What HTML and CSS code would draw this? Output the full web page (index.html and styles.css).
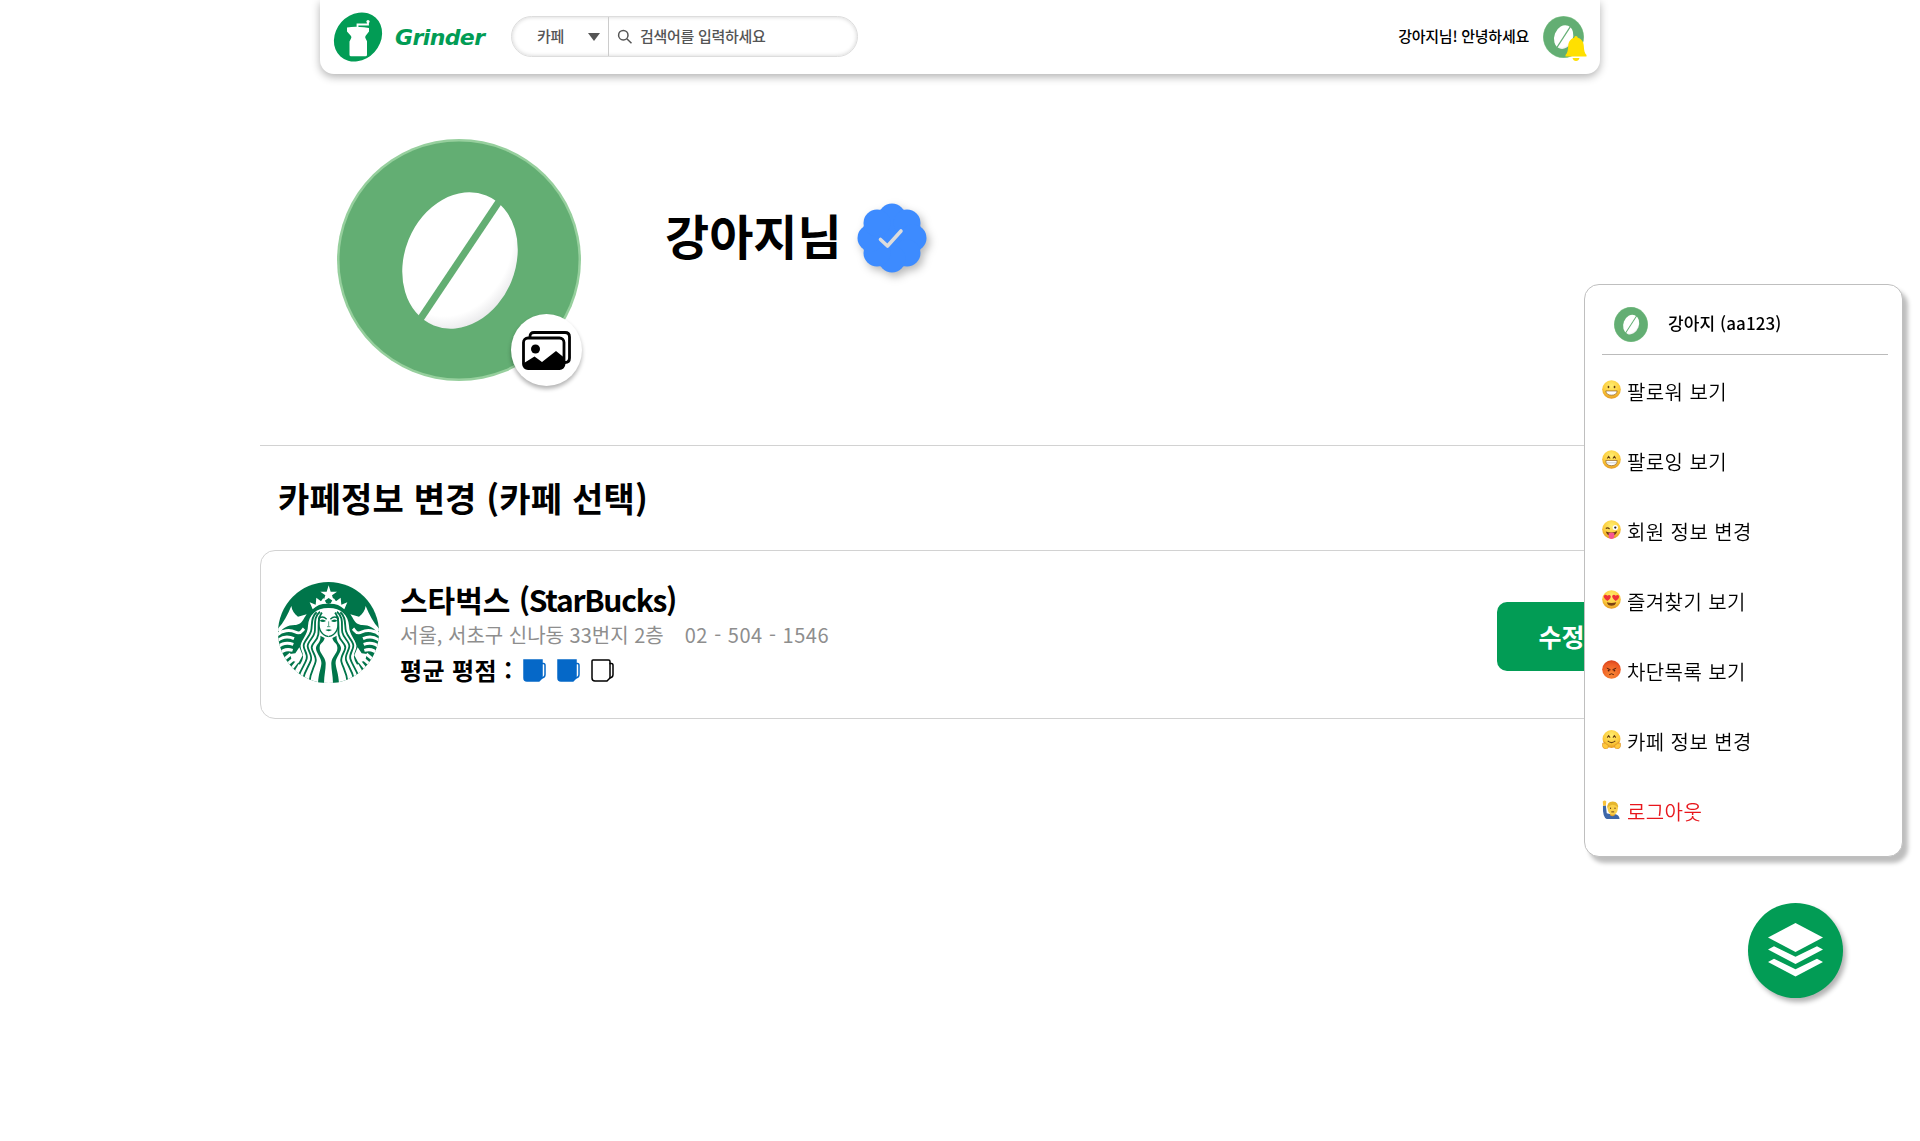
FILE: index.html
```html
<!DOCTYPE html>
<html lang="ko">
<head>
<meta charset="utf-8">
<title>Grinder</title>
<link rel="stylesheet" href="styles.css">
</head>
<body>
<svg class="defs" aria-hidden="true">
  <defs>
    <radialGradient id="beanShade" cx="0.4" cy="0.42" r="0.66">
      <stop offset="0.78" stop-color="#fff"/><stop offset="1" stop-color="#e4e4e6"/>
    </radialGradient>
    <radialGradient id="yellowFace" cx="0.5" cy="0.3" r="0.75">
      <stop offset="0" stop-color="#ffee70"/><stop offset="0.6" stop-color="#fccb3c"/><stop offset="1" stop-color="#e08e1c"/>
    </radialGradient>
    <radialGradient id="redFace" cx="0.5" cy="0.75" r="0.8">
      <stop offset="0" stop-color="#fa8a35"/><stop offset="0.7" stop-color="#ed5b25"/><stop offset="1" stop-color="#cf3a18"/>
    </radialGradient>
    <symbol id="avatar" viewBox="0 0 244 242" preserveAspectRatio="none">
      <ellipse cx="122" cy="121" rx="122" ry="121" fill="#96cf9d"/>
      <ellipse cx="122" cy="121" rx="119.5" ry="118.5" fill="#63ae73"/>
      <ellipse cx="123" cy="121.500" rx="55.500" ry="70" transform="rotate(22 123 121.500)" fill="url(#beanShade)"/>
      <path d="M82 182 163 61" stroke="#63ae73" stroke-width="7"/>
    </symbol>
  </defs>
</svg>

<header class="header">
  <a class="brand">
    <svg class="brand-logo" viewBox="0 0 48 48">
      <ellipse cx="24" cy="24" rx="22.300" ry="26.200" transform="rotate(42 24 24)" fill="#029c55"/>
      <path d="M13 14.500q8-1.500 17-.2l5 .7v3.500l-3.500 4.500q-.6 1.200 0 2.200l1.500 3v13.500q0 1.500-1.500 1.500H17q-1.500 0-1.500-1.500V28.500l1.500-3q.8-1.200 0-2.500L13 18.500z" fill="#fff"/>
      <path d="M23.500 14v-2.500h10.500v-3" fill="none" stroke="#fff" stroke-width="1.800"/>
      <circle cx="34" cy="8.500" r="1.600" fill="#fff"/>
    </svg>
    <span class="brand-name">Grinder</span>
  </a>
  <div class="search">
    <div class="search-type"><span>카페</span><i class="caret"></i></div>
    <div class="search-box">
      <svg class="search-icon" viewBox="0 0 16 16"><circle cx="6.300" cy="6.200" r="4.700"/><path d="m9.800 9.700 4.700 4.600"/></svg>
      <span>검색어를 입력하세요</span>
    </div>
  </div>
  <div class="greeting">
    <span class="greeting-text">강아지님! 안녕하세요</span>
    <div class="greeting-avatar">
      <svg class="fill"><use href="#avatar"/></svg>
      <svg class="bell" viewBox="0 0 22 26"><path d="M11 0q1.600 0 1.800 1.700C17 3 18.600 6 18.800 10c.2 4.500.8 7 2.700 9v1.500H.5V19c1.900-2 2.500-4.500 2.700-9C3.400 6 5 3 9.200 1.700 9.400 0 11 0 11 0z"/><path d="M7.500 22h7q-.8 3-3.500 3t-3.500-3z"/></svg>
    </div>
  </div>
</header>

<main class="page">
  <section class="profile">
    <div class="profile-picture">
      <svg class="fill"><use href="#avatar"/></svg>
      <button class="picture-button">
        <svg viewBox="0 0 49 39"><path d="M8 6V5.500Q8 1.500 12 1.500H43Q47.500 1.500 47.500 6V27Q47.500 31.500 43 31.500H42" fill="none" stroke="#000" stroke-width="2.800"/><rect x="1.500" y="7" width="40.500" height="30.500" rx="4.500" fill="#fff" stroke="#000" stroke-width="2.800"/><circle cx="13.500" cy="18" r="4.500"/><path d="m2 32 10.500-6.500L20 31l14-11 8 6.500V34q0 4-4 4H5q-3 0-3-3z"/></svg>
      </button>
    </div>
    <h1 class="profile-name">강아지님</h1>
    <svg class="verified" viewBox="0 0 70 70">
      <g fill="#3d8bff"><circle cx="35" cy="35" r="30.500"/><circle cx="35" cy="14" r="13.500"/><circle cx="50" cy="20" r="13.500"/><circle cx="56" cy="35" r="13.500"/><circle cx="50" cy="50" r="13.500"/><circle cx="35" cy="56" r="13.500"/><circle cx="20" cy="50" r="13.500"/><circle cx="14" cy="35" r="13.500"/><circle cx="20" cy="20" r="13.500"/></g>
      <path d="m23.500 36.500 7 6.500L44 28" fill="none" stroke="#dcdcdc" stroke-width="3.600" stroke-linecap="round" stroke-linejoin="round"/>
    </svg>
  </section>

  <section class="cafes">
    <h2 class="cafes-title">카페정보 변경 (카페 선택)</h2>
    <article class="cafe">
      <svg class="cafe-logo" viewBox="24 20 303 303">
        <defs>
          <clipPath id="disc"><circle cx="175.500" cy="171.500" r="151.500"/></clipPath>
          <g id="sirenHalf">
            <path d="M64 92C66 106 73 116 84 124L110 117C100 130 98 146 78 149 54 148 38 158 30 172L20 164C38 146 52 122 64 92Z" fill="#fff"/>
            <g fill="none" stroke="#fff" stroke-width="9">
              <path d="M20 180C36 164 60 162 76 170S96 166 102 160"/>
              <path d="M20 198C38 182 58 184 72 190"/><path d="M22 217C38 200 58 203 70 207"/>
              <path d="M28 236C42 219 58 222 68 225"/><path d="M38 256 62 236"/>
              <path d="M46 272 74 248"/><path d="M60 286 82 258"/><path d="M72 300 90 268"/>
            </g>
            <path d="M60 236 76 234 88 216 98 240 86 262 66 256Z" fill="#fff"/>
            <path d="M177 98C139 97 116 119 114 151 113 178 96 190 92 210 90 224 103 234 98 250 95 266 78 279 74 294L100 314 166 326 177 326Z" fill="#fff"/>
            <g fill="none" stroke="#00754a" stroke-width="5.500">
              <path d="M140 111C121 126 128 150 123 168S101 197 101 211 114 235 110 250 95 278 85 304"/>
              <path d="M150 109C128 126 138 152 134 171S112 199 113 213 127 239 123 254 105 284 99 312"/>
              <path d="M156 112C140 128 148 156 145 177S124 204 125 217 140 242 137 258 121 289 118 322"/>
            </g>
            <path d="M151 181C154 203 136 207 138 221S156 249 154 266 145 296 144 326H162C162 300 168 280 167 262S147 233 149 216 160 205 164 188Z" fill="#00754a"/>
            <path d="M176 85C156 84 140 89 128 102L119 81 137 88 139 67 153 78 160 68 169 84Z" fill="#fff"/>
            <path d="M145 131Q157 119 170 132" fill="none" stroke="#00754a" stroke-width="4"/>
            <path d="M149 136Q159 128 168 137 158 143 149 136Z" fill="#00754a"/>
            <path d="M148 123C143 153 148 178 176 184" fill="none" stroke="#00754a" stroke-width="4"/>
          </g>
        </defs>
        <g clip-path="url(#disc)">
          <rect x="24" y="20" width="303" height="303" fill="#00754a"/>
          <use href="#sirenHalf"/><use href="#sirenHalf" transform="translate(351 0) scale(-1 1)"/>
          <path d="M176 30 182 49H201L186 60 192 79 176 68 160 79 166 60 151 49H170Z" fill="#fff"/>
          <path d="M176 138V153M171 154h10" fill="none" stroke="#00754a" stroke-width="2"/>
          <path d="M166 164Q176 159 186 164 176 171 166 164Z" fill="#00754a"/>
        </g>
      </svg>
      <div class="cafe-info">
        <h3 class="cafe-name">스타벅스 <span class="latin">(StarBucks)</span></h3>
        <p class="cafe-address"><span>서울, 서초구 신나동 33번지 2층</span><span class="cafe-phone">02 - 504 - 1546</span></p>
        <div class="cafe-rating">
          <span class="rating-label">평균 평점 :</span>
          <svg class="cup cup-full" viewBox="0 0 23 23"><path d="M1 1h18v18l-3 3H4q-3 0-3-3z"/><path d="M18.500 4.500h2q1.500 0 1.500 2v9q0 3-3.500 3.500" fill="none"/></svg>
          <svg class="cup cup-full" viewBox="0 0 23 23"><path d="M1 1h18v18l-3 3H4q-3 0-3-3z"/><path d="M18.500 4.500h2q1.500 0 1.500 2v9q0 3-3.500 3.500" fill="none"/></svg>
          <svg class="cup" viewBox="0 0 23 23"><path d="M2 1h15.500q1.500 0 1.500 1.500V19l-3 3H4q-3 0-3-3V2q0-1 1-1z"/><path d="M18.500 4.500h2q1.500 0 1.500 2v9q0 3-3.500 3.500" fill="none"/></svg>
        </div>
      </div>
      <button class="edit-button">수정</button>
    </article>
  </section>
</main>

<aside class="menu">
  <div class="menu-user"><svg class="menu-avatar"><use href="#avatar"/></svg><strong>강아지 (aa123)</strong></div>
  <ul class="menu-list">
    <li><svg class="emoji" viewBox="0 0 20 20"><circle cx="10" cy="10" r="9.800" fill="url(#yellowFace)"/><path d="M4 11.500h12q-.5 4.500-6 4.500t-6-4.500z" fill="#fff" stroke="#8a5518" stroke-width=".7"/><g fill="#643c12"><ellipse cx="6.800" cy="7.300" rx=".9" ry="1.300"/><ellipse cx="13.200" cy="7.300" rx=".9" ry="1.300"/></g></svg>팔로워 보기</li>
    <li><svg class="emoji" viewBox="0 0 20 20"><circle cx="10" cy="10" r="9.800" fill="url(#yellowFace)"/><path d="M4 11h12q0 5.500-6 5.500T4 11z" fill="#fff" stroke="#8a5518" stroke-width=".7"/><path d="M4.500 13.500h11" stroke="#aaa" stroke-width=".6"/><path d="m5.500 9 1.500-2.300L8.500 9m3 0L13 6.700 14.500 9" fill="none" stroke="#643c12" stroke-width="1.100"/></svg>팔로잉 보기</li>
    <li><svg class="emoji" viewBox="0 0 20 20"><circle cx="10" cy="10" r="9.800" fill="url(#yellowFace)"/><path d="M4 12q6 2.500 12-.5-1 5-6 5t-6-4.500z" fill="#6e3814"/><path d="M7 14q3.500-1.500 6 0v3.500q-.5 2.500-3 2.500t-3-2.500z" fill="#f75593"/><path d="M4 9q2-1.500 4 .5" fill="none" stroke="#643c12" stroke-width="1.200"/><circle cx="14" cy="8" r="2.800" fill="#fff"/><circle cx="14" cy="8" r="1.200" fill="#222"/></svg>회원 정보 변경</li>
    <li><svg class="emoji" viewBox="0 0 20 20"><circle cx="10" cy="10" r="9.800" fill="url(#yellowFace)"/><path d="M5 13q5 1.500 10 0-1 3.700-5 3.700T5 13z" fill="#7c4212"/><g fill="#ee3237"><path d="M5.600 11.500Q1 8 2 6q1.700-2 3.600 0 2.300-1.800 3.600.3.500 2.500-3.600 5.200z"/><path d="M14.400 11.500Q10 8 10.800 6q1.700-2 3.600 0 2.300-1.800 3.600.3.500 2.500-3.600 5.200z"/></g></svg>즐겨찾기 보기</li>
    <li><svg class="emoji" viewBox="0 0 20 20"><circle cx="10" cy="10" r="9.800" fill="url(#redFace)"/><path d="M7.500 15.500q2.500-2 5 0M5 8.500l4 1.800m6-1.800-4 1.800" fill="none" stroke="#5a1d0a" stroke-width="1"/><circle cx="7" cy="11" r="1" fill="#5a1d0a"/><circle cx="13" cy="11" r="1" fill="#5a1d0a"/></svg>차단목록 보기</li>
    <li><svg class="emoji" viewBox="0 0 20 20"><circle cx="10" cy="9.500" r="9.400" fill="url(#yellowFace)"/><path d="m5.500 8 1.500-2L8.500 8m3 0L13 6l1.500 2M6 11.500q4 3.500 8 0" fill="none" stroke="#643c12" stroke-width="1.100"/><g fill="#ffc93d" stroke="#d88b20" stroke-width=".6"><path d="M.5 14l1.800.5.2-2 1.500 2 2.500 1.500q1 3-1.500 3.800-4 .2-4.500-2.800z"/><path d="m19.500 14-1.800.5-.2-2-1.500 2-2.500 1.500q-1 3 1.500 3.800 4 .2 4.500-2.800z"/></g></svg>카페 정보 변경</li>
    <li class="logout"><svg class="emoji" viewBox="0 0 20 20"><path d="M1 6 4 5.500 5 14l4 1h5q4 .5 4.500 5H5Q.5 18 1 6z" fill="#3d67a8"/><path d="M1.200 6 .8 1.500Q3-.5 4.500 1.500L4 6z" fill="#f9c33c"/><path d="M8.500 13h5v3q-2.500 2-5 0z" fill="#dfa02a"/><ellipse cx="11.300" cy="8.800" rx="5.400" ry="6.800" fill="#fbd14b"/><path d="M5.800 9Q4.500 2 11.300 1.500 18 2 16.800 9 16 5.500 11.300 5 6.800 5.500 5.800 9z" fill="#e6b62e"/><path d="M9 8v1.500m4.700-1.500v1.500M9.800 12.500h3" stroke="#643c12"/></svg>로그아웃</li>
  </ul>
</aside>

<button class="fab">
  <svg viewBox="0 0 55 54"><path d="M27.500 0 55 14.500 27.500 29 0 14.500z"/><path d="m0 26.500 6-3.200 21.500 10.500L49 23.300l6 3.200L27.500 41z"/><path d="m0 39 6-3.200 21.500 10.500L49 35.800l6 3.200L27.500 53.500z"/></svg>
</button>
</body>
</html>
```
FILE: styles.css
```css
* { box-sizing: border-box; }
body {
  margin: 0;
  min-height: 1141px;
  background: #fff;
  color: #000;
  font-family: "Noto Sans CJK KR", sans-serif;
  overflow: hidden;
}
h1, h2, h3, p, ul { margin: 0; padding: 0; }
button { border: 0; padding: 0; font-family: inherit; }
svg { display: block; flex: none; }
.defs { position: absolute; width: 0; height: 0; }
.fill { width: 100%; height: 100%; }

.header {
  width: 1280px;
  height: 74px;
  margin: 0 auto;
  padding: 0 16px 1px 14px;
  display: flex;
  align-items: center;
  border-radius: 0 0 14px 14px;
  box-shadow: 0 3px 8px rgba(0, 0, 0, .3);
}
.brand { display: flex; align-items: center; gap: 13px; width: 177px; }
.brand-logo { width: 48px; height: 48px; overflow: visible; }
.brand-name {
  padding-top: 2px;
  font: italic bold 22px/30px "DejaVu Sans", Verdana, sans-serif;
  letter-spacing: -.6px;
  color: #029c55;
}
.search {
  display: flex;
  width: 347px;
  height: 41px;
  border-radius: 21px;
  border: 1px solid #ddd;
  box-shadow: inset 0 0 4px rgba(0, 0, 0, .18);
  color: #555;
  font-size: 15px;
  font-weight: 500;
  letter-spacing: -.3px;
}
.search span, .greeting-text { padding-bottom: 2px; }
.search-type {
  width: 97px;
  display: flex;
  align-items: center;
  justify-content: space-between;
  padding: 0 8px 0 25px;
  border-right: 1px solid #ccc;
}
.caret { border: 6.5px solid transparent; border-top: 8px solid #555; border-bottom: 0; }
.search-box { display: flex; align-items: center; gap: 7px; padding-left: 8px; }
.search-icon { width: 16px; height: 16px; fill: none; stroke: #555; stroke-width: 1.5; }
.greeting { margin-left: auto; display: flex; align-items: center; gap: 14px; }
.greeting-text { font-size: 15px; font-weight: 500; letter-spacing: -.25px; }
.greeting-avatar { position: relative; width: 41px; height: 42px; }
.bell { position: absolute; left: 22px; top: 20px; width: 22px; height: 26px; fill: #ffe000; }

.page { width: 1400px; margin: 0 auto; }
.profile {
  height: 372px;
  padding: 65px 0 0 77px;
  display: flex;
  border-bottom: 1px solid #d2d2d2;
}
.profile-picture { position: relative; width: 244px; height: 242px; }
.picture-button {
  position: absolute;
  left: 174px;
  top: 175px;
  width: 71px;
  height: 72px;
  border-radius: 50%;
  background: #fff;
  box-shadow: 0 3px 4px rgba(0, 0, 0, .3);
  display: grid;
  place-items: center;
}
.picture-button svg { width: 49px; height: 39px; }
.profile-name { margin: 60px 0 0 84px; width: 192px; font-size: 48px; line-height: 70px; font-weight: 700; white-space: nowrap; }
.verified { width: 70px; height: 70px; margin-top: 64px; overflow: visible; filter: drop-shadow(3px 4px 4px rgba(0, 0, 0, .28)); }

.cafes-title { padding-left: 18px; height: 104px; line-height: 104px; font-size: 34px; font-weight: 700; letter-spacing: .2px; white-space: nowrap; }
.cafe {
  height: 169px;
  padding: 2px 33px 0 17px;
  border: 1px solid #d2d2d2;
  border-radius: 15px;
  display: flex;
  align-items: center;
}
.cafe-logo { width: 101px; height: 101px; margin-top: -7px; }
.cafe-info { margin: -3px 0 0 21px; }
.cafe-name { font-size: 30px; line-height: 38px; font-weight: 700; white-space: nowrap; }
.cafe-name .latin { letter-spacing: -1.3px; }
.cafe-address { display: flex; gap: 21px; line-height: 34px; font-size: 20px; color: #8e8e8e; white-space: pre; }
.cafe-phone { letter-spacing: .55px; }
.cafe-rating { display: flex; align-items: center; line-height: 36px; font-size: 24px; font-weight: 700; }
.rating-label { width: 123px; letter-spacing: .4px; white-space: nowrap; }
.cup { width: 23px; height: 23px; margin-right: 11px; fill: #fff; stroke: #000; stroke-width: 1.5; }
.cup-full { fill: #0568c8; stroke: #0568c8; }
.edit-button {
  margin: 2px 0 0 auto;
  width: 129px;
  height: 69px;
  padding-bottom: 2px;
  border-radius: 10px;
  background: #029c55;
  color: #fff;
  font-size: 25px;
  font-weight: 700;
}

.menu {
  position: fixed;
  left: 1584px;
  top: 284px;
  width: 319px;
  height: 573px;
  padding: 0 14px 0 17px;
  border: 1px solid #bfbfbf;
  border-radius: 15px;
  background: #fff;
  box-shadow: 5px 6px 4px rgba(0, 0, 0, .26);
}
.menu-user {
  display: flex;
  align-items: center;
  gap: 20px;
  height: 70px;
  padding: 9px 0 0 12px;
  border-bottom: 1px solid #bbb;
  font-size: 17px;
}
.menu-user strong { font-weight: 500; margin-top: -4px; letter-spacing: .1px; }
.menu-avatar { width: 34px; height: 35px; }
.menu-list { list-style: none; }
.menu-list li { display: flex; align-items: center; gap: 6px; height: 70px; padding-top: 2px; font-size: 20px; font-weight: 350; letter-spacing: .4px; }
.menu-list .logout { color: #e8161c; }
.emoji { width: 19px; height: 19px; margin-top: -4px; }

.fab {
  position: fixed;
  left: 1748px;
  top: 903px;
  width: 95px;
  height: 95px;
  border-radius: 50%;
  background: #029c55;
  box-shadow: 3px 4px 5px rgba(0, 0, 0, .3);
  display: grid;
  place-items: center;
}
.fab svg { width: 55px; height: 54px; fill: #fff; margin-top: -1px; }
```
